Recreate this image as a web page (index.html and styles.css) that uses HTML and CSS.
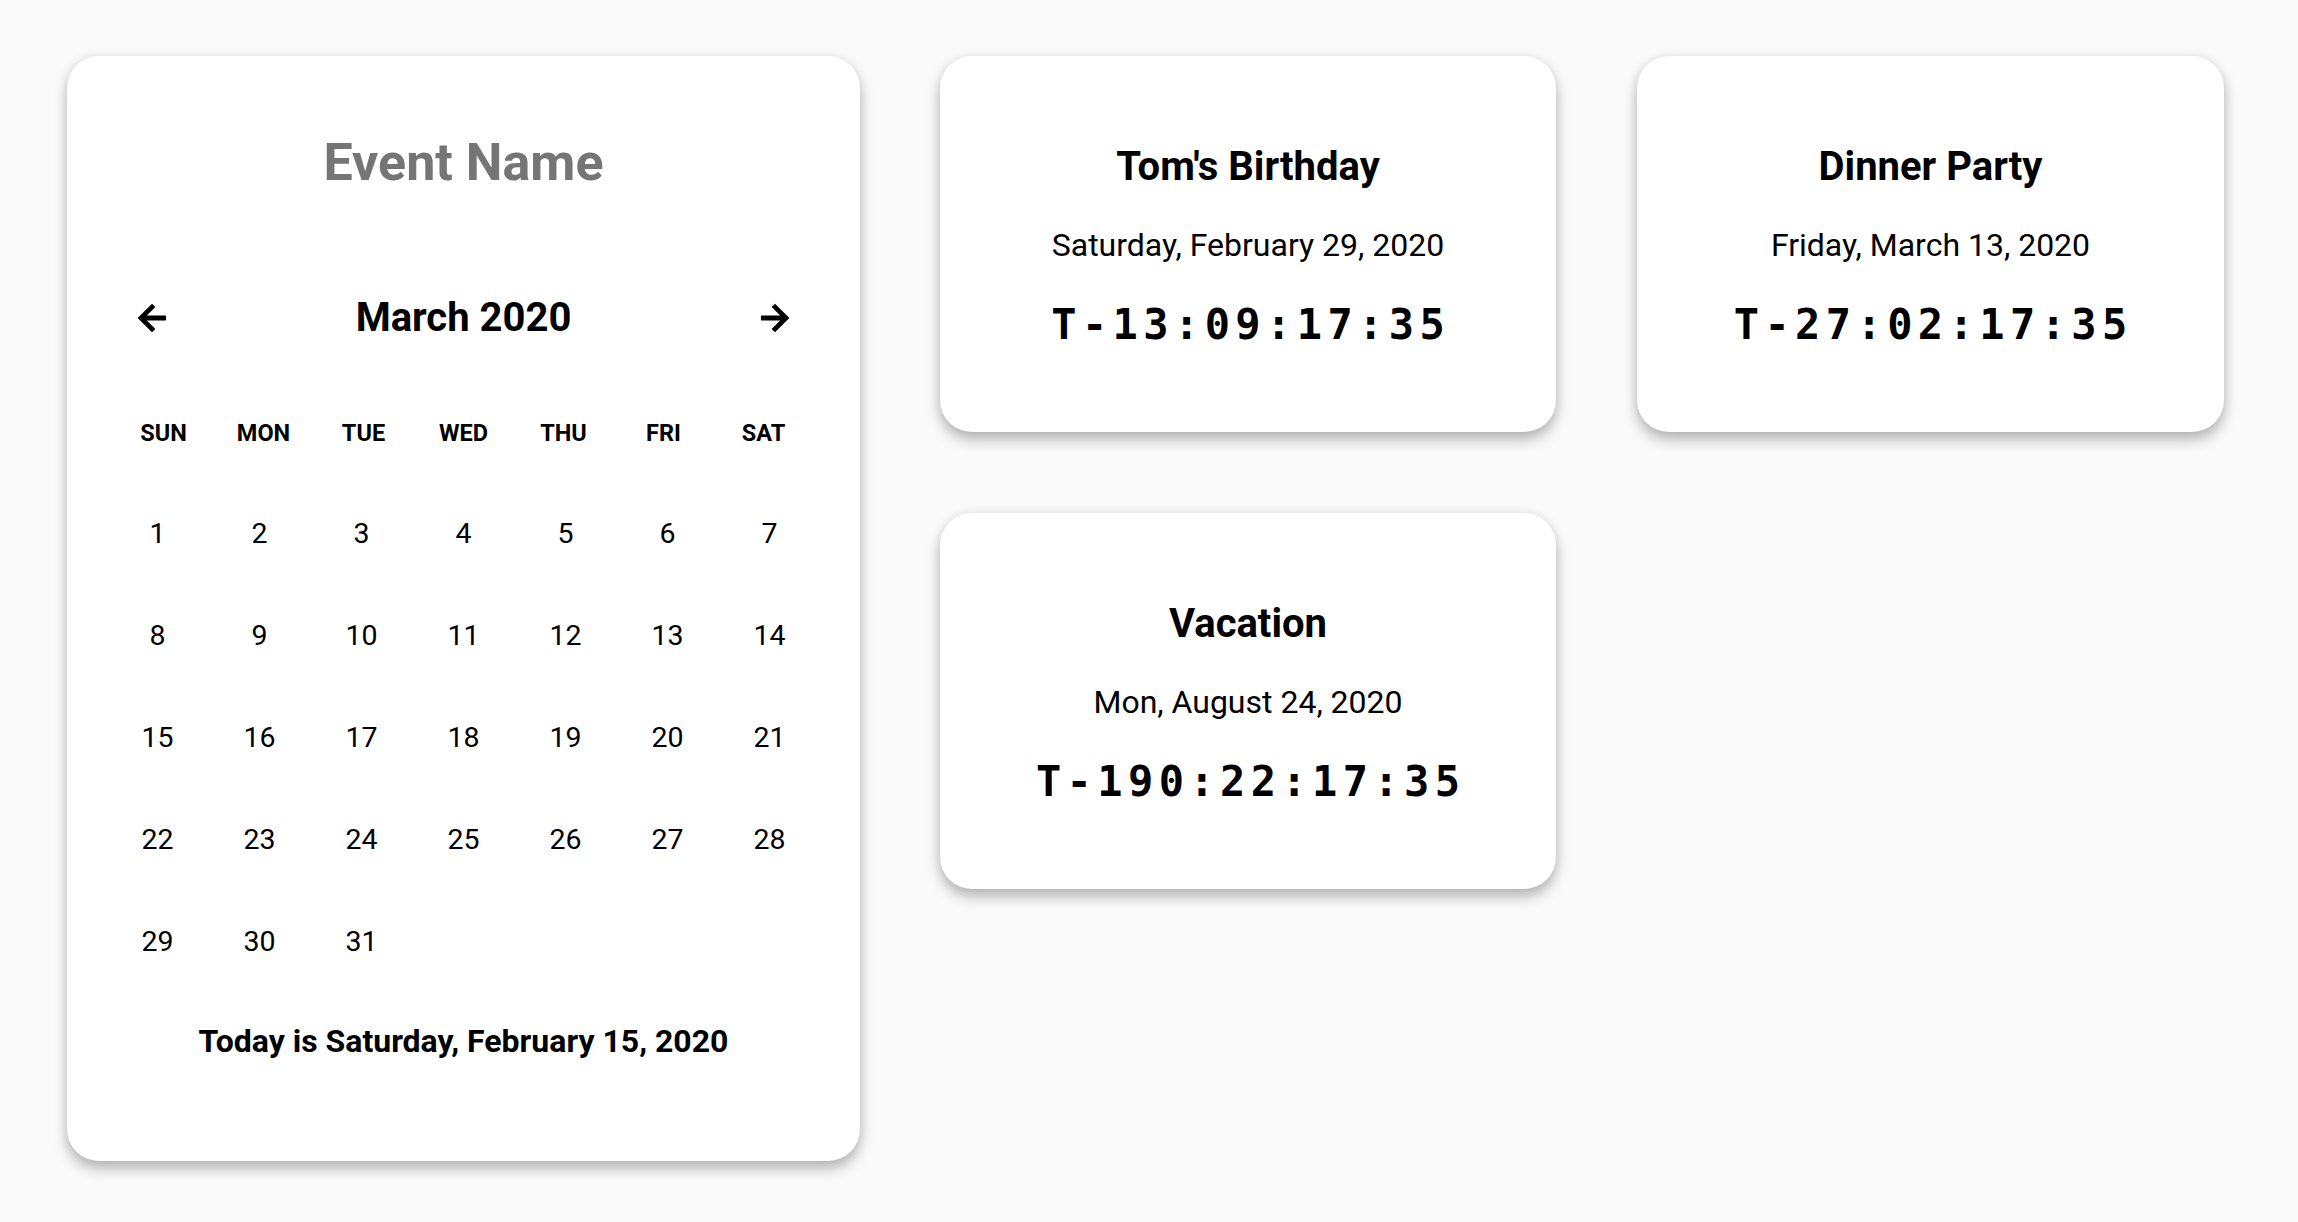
FILE: index.html
```html
<!DOCTYPE html>
<html lang="en">
<head>
<meta charset="utf-8">
<title>Event Countdown</title>
<link rel="stylesheet" href="styles.css">
</head>
<body>
<main class="page">
  <section class="card calendar">
    <h1 class="event-name">Event Name</h1>
    <div class="cal-nav">
      <button class="nav-btn" aria-label="Previous month">
        <svg viewBox="0 0 24 24" class="nav-icon"><path d="M20 11H7.83l5.59-5.59L12 4l-8 8 8 8 1.41-1.41L7.83 13H20v-2z"/></svg>
      </button>
      <div class="month">March 2020</div>
      <button class="nav-btn" aria-label="Next month">
        <svg viewBox="0 0 24 24" class="nav-icon"><path d="M12 4l-1.41 1.41L16.17 11H4v2h12.17l-5.58 5.59L12 20l8-8z"/></svg>
      </button>
    </div>
    <div class="weekdays">
      <span>SUN</span><span>MON</span><span>TUE</span><span>WED</span><span>THU</span><span>FRI</span><span>SAT</span>
    </div>
    <div class="days">
      <span>1</span><span>2</span><span>3</span><span>4</span><span>5</span><span>6</span><span>7</span>
      <span>8</span><span>9</span><span>10</span><span>11</span><span>12</span><span>13</span><span>14</span>
      <span>15</span><span>16</span><span>17</span><span>18</span><span>19</span><span>20</span><span>21</span>
      <span>22</span><span>23</span><span>24</span><span>25</span><span>26</span><span>27</span><span>28</span>
      <span>29</span><span>30</span><span>31</span>
    </div>
    <p class="today">Today is Saturday, February 15, 2020</p>
  </section>

  <div class="events">
    <section class="card event wide">
      <h2 class="event-title">Tom's Birthday</h2>
      <p class="event-date">Saturday, February 29, 2020</p>
      <p class="countdown">T-13:09:17:35</p>
    </section>
    <section class="card event narrow">
      <h2 class="event-title">Dinner Party</h2>
      <p class="event-date">Friday, March 13, 2020</p>
      <p class="countdown">T-27:02:17:35</p>
    </section>
    <section class="card event wide">
      <h2 class="event-title">Vacation</h2>
      <p class="event-date">Mon, August 24, 2020</p>
      <p class="countdown">T-190:22:17:35</p>
    </section>
  </div>
</main>
</body>
</html>
```

FILE: styles.css
```css
* { box-sizing: border-box; }

html, body {
  margin: 0;
  padding: 0;
  background: #fafafa;
  font-family: Roboto, "Noto Sans", sans-serif;
  color: #000;
}

.page {
  display: flex;
  align-items: flex-start;
  gap: 80px;
  min-height: 1222px;
  padding: 56px 0 40px 67px;
}

.card {
  background: #fff;
  border-radius: 32px;
  box-shadow: 0 8px 14px rgba(0, 0, 0, 0.26), 0 0 12px rgba(0, 0, 0, 0.07);
}

/* Calendar */
.calendar {
  width: 793px;
  height: 1105px;
  padding: 77px 39px 0;
  display: flex;
  flex-direction: column;
}

.event-name {
  margin: 0;
  font-size: 52px;
  line-height: 60px;
  font-weight: 700;
  color: #757575;
  text-align: center;
}

.cal-nav {
  margin-top: 95px;
  height: 60px;
  display: flex;
  align-items: center;
}

.nav-btn {
  width: 92px;
  height: 60px;
  padding: 0;
  border: 0;
  background: transparent;
  display: flex;
  align-items: center;
  justify-content: center;
}

.nav-icon {
  width: 40px;
  height: 40px;
  fill: #000;
  stroke: #000;
  stroke-width: 0.9;
  stroke-linejoin: round;
}

.month {
  flex: 1;
  text-align: center;
  font-size: 40px;
  line-height: 60px;
  font-weight: 700;
}

.weekdays {
  margin: 64px auto 0;
  width: 700px;
  display: grid;
  grid-template-columns: repeat(7, 100px);
  font-size: 23.5px;
  line-height: 42px;
  font-weight: 700;
  text-align: center;
}

.days {
  margin: 28px auto 0;
  width: 714px;
  display: grid;
  grid-template-columns: repeat(7, 102px);
  grid-auto-rows: 102px;
  font-size: 28.5px;
  text-align: center;
}

.days span {
  display: flex;
  align-items: center;
  justify-content: center;
}

.today {
  margin: 29px 0 0;
  font-size: 32px;
  line-height: 40px;
  font-weight: 700;
  text-align: center;
}

/* Event cards */
.events {
  display: grid;
  grid-template-columns: 616px 587px;
  column-gap: 81px;
  row-gap: 81px;
  align-items: start;
}

.event {
  height: 376px;
  padding-top: 86px;
  text-align: center;
}

.event-title {
  margin: 0;
  font-size: 40px;
  line-height: 50px;
  font-weight: 700;
}

.event-date {
  margin: 33px 0 0;
  font-size: 32px;
  line-height: 40px;
}

.countdown {
  margin: 34px 0 0;
  padding-left: 5.4px;
  font-family: "DejaVu Sans Mono", "Liberation Mono", monospace;
  font-size: 42px;
  line-height: 52px;
  font-weight: 700;
  letter-spacing: 5.4px;
}
```
